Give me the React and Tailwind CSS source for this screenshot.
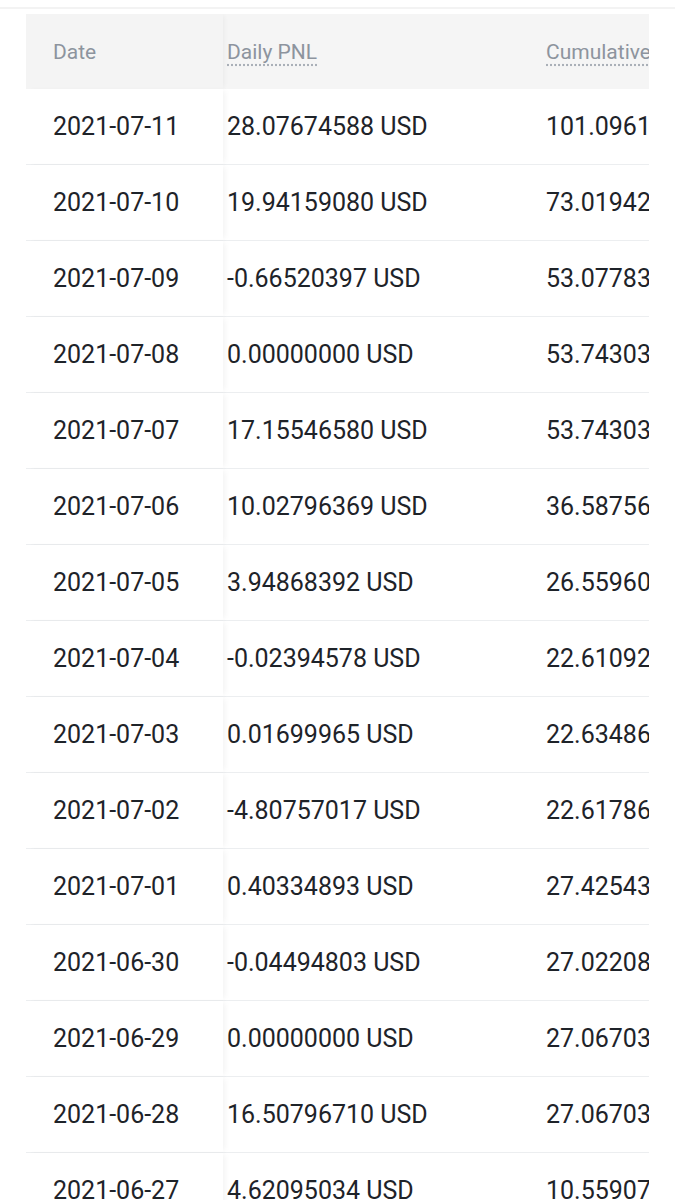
import React from 'react';

const rows = [
  ['2021-07-11', '28.07674588 USD', '101.09614818 USD'],
  ['2021-07-10', '19.94159080 USD', '73.01942230 USD'],
  ['2021-07-09', '-0.66520397 USD', '53.07783150 USD'],
  ['2021-07-08', '0.00000000 USD', '53.74303547 USD'],
  ['2021-07-07', '17.15546580 USD', '53.74303547 USD'],
  ['2021-07-06', '10.02796369 USD', '36.58756967 USD'],
  ['2021-07-05', '3.94868392 USD', '26.55960598 USD'],
  ['2021-07-04', '-0.02394578 USD', '22.61092206 USD'],
  ['2021-07-03', '0.01699965 USD', '22.63486784 USD'],
  ['2021-07-02', '-4.80757017 USD', '22.61786819 USD'],
  ['2021-07-01', '0.40334893 USD', '27.42543836 USD'],
  ['2021-06-30', '-0.04494803 USD', '27.02208943 USD'],
  ['2021-06-29', '0.00000000 USD', '27.06703746 USD'],
  ['2021-06-28', '16.50796710 USD', '27.06703746 USD'],
  ['2021-06-27', '4.62095034 USD', '10.55907036 USD'],
];

const font = { fontFamily: 'Roboto, "Noto Sans", sans-serif' };

export default function App() {
  return (
    <div className="w-[675px] h-[1200px] overflow-hidden bg-white" style={font}>
      <div className="h-[7px]" />
      <div className="h-[2px] bg-[#f3f3f3]" />
      <div className="h-[5px]" />
      <div className="ml-[26px] w-[623px] overflow-hidden">
        {/* header */}
        <div className="flex h-[75px] items-center bg-[#f5f5f5] pt-[3px] text-[21px] text-[#8d949e] whitespace-nowrap">
          <div className="relative z-10 -mt-[3px] flex h-[75px] w-[197px] shrink-0 items-center bg-[#f4f4f4] pl-[27px] pt-[3px] shadow-[3px_0_5px_-2px_rgba(0,0,0,0.05)]">
            Date
          </div>
          <div className="w-[323px] shrink-0 pl-[4px]">
            <span className="underline decoration-dotted decoration-[#aab0b8] underline-offset-[5px]">Daily PNL</span>
          </div>
          <div className="shrink-0">
            <span className="underline decoration-dotted decoration-[#aab0b8] underline-offset-[5px]">Cumulative PNL</span>
          </div>
        </div>
        {/* rows */}
        {rows.map(([date, daily, cum]) => (
          <div
            key={date}
            className="flex h-[76px] items-center border-b border-[#eceef0] text-[25px] text-[#1e2329] whitespace-nowrap"
          >
            <div className="relative z-10 flex h-full w-[197px] shrink-0 items-center bg-white pl-[27px] shadow-[4px_0_6px_-2px_rgba(0,0,0,0.05)]">
              {date}
            </div>
            <div className="w-[323px] shrink-0 pl-[4px]">{daily}</div>
            <div className="shrink-0">{cum}</div>
          </div>
        ))}
      </div>
    </div>
  );
}
